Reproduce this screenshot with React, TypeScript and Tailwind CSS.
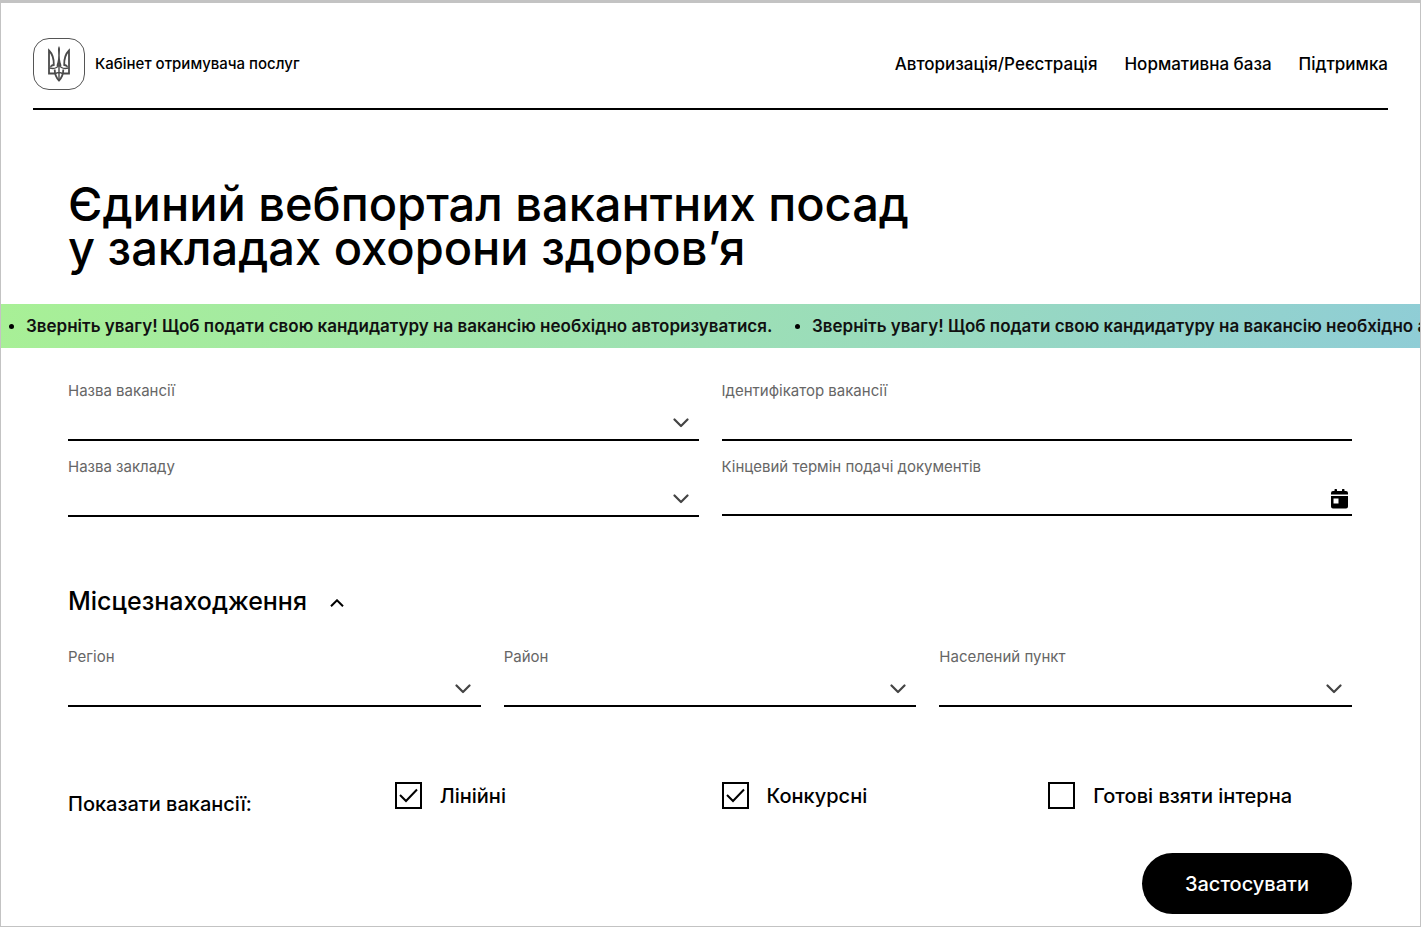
import { useState } from 'react';

const NAV_LINKS = ['Авторизація/Реєстрація', 'Нормативна база', 'Підтримка'];

const NOTICE = 'Зверніть увагу! Щоб подати свою кандидатуру на вакансію необхідно авторизуватися.';

const LOCATION_FIELDS = [
    { id: 'region', label: 'Регіон' },
    { id: 'district', label: 'Район' },
    { id: 'city', label: 'Населений пункт' },
];

const VACANCY_TYPES = [
    { id: 'linear', label: 'Лінійні', checked: true },
    { id: 'contest', label: 'Конкурсні', checked: true },
    { id: 'intern', label: 'Готові взяти інтерна', checked: false },
];

interface FieldProps {
    id: string;
    label: string;
}

function FieldLabel({ id, label }: FieldProps) {
    return (
        <label htmlFor={id} className="block text-[15px] leading-5 text-[#666666]">
            {label}
        </label>
    );
}

function SelectField({ id, label }: FieldProps) {
    return (
        <div>
            <FieldLabel id={id} label={label} />
            <div className="relative border-b-2 border-black">
                <select id={id} className="block h-[38px] w-full appearance-none bg-transparent pr-10 outline-none">
                    <option value=""></option>
                </select>
                <svg
                    viewBox="0 0 16 10"
                    className="pointer-events-none absolute right-2.5 top-[17px] h-2.5 w-4"
                    fill="none"
                    stroke="#444444"
                    strokeWidth="2.2"
                    strokeLinecap="round"
                    strokeLinejoin="round"
                >
                    <path d="M1.500 1.500l6.500 6.500 6.500-6.500" />
                </svg>
            </div>
        </div>
    );
}

function TextField({ id, label }: FieldProps) {
    return (
        <div>
            <FieldLabel id={id} label={label} />
            <input
                id={id}
                type="text"
                className="block h-10 w-full border-b-2 border-black bg-transparent outline-none"
            />
        </div>
    );
}

function DateField({ id, label }: FieldProps) {
    return (
        <div>
            <FieldLabel id={id} label={label} />
            <div className="flex h-[39px] items-center border-b-2 border-black pr-1">
                <input id={id} type="text" className="h-full min-w-0 flex-1 bg-transparent outline-none" />
                <button type="button" aria-label="Відкрити календар" className="pt-1.5">
                    <svg viewBox="0 0 17 20" className="h-5 w-[17px]" fill="black">
                        <path d="M3.500 1a1 1 0 0 1 2.500 0v1h5V1a1 1 0 0 1 2.500 0v1H15a2 2 0 0 1 2 2v1.500H0V4a2 2 0 0 1 2-2h1.500z" />
                        <path
                            fillRule="evenodd"
                            d="M0 7h17v10.500a2 2 0 0 1-2 2H2a2 2 0 0 1-2-2zM2.500 9.500v5H7.500v-5z"
                        />
                    </svg>
                </button>
            </div>
        </div>
    );
}

function Trident() {
    return (
        <svg viewBox="0 0 24 36" className="h-9 w-6" fill="none" stroke="#4a4a4a" strokeWidth="1.800">
            {/* middle prong */}
            <path
                d="M12 0c-1 1.500-1.200 3-.9 6 .4 5 0 9-1.600 13.500l1 1L12 18.500l1.500 2 1-1c-1.600-4.500-2-8.500-1.600-13.500.3-3 .1-4.500-.9-6z"
                fill="#4a4a4a"
                stroke="none"
            />
            {/* side prongs */}
            <path d="M8.500 27.500H2V4.500c3.500 3.500 5 8 4.800 14.500-2 .2-3 1-2.800 2" />
            <path d="M15.500 27.500H22V4.500c-3.500 3.500-5 8-4.800 14.500 2 .2 3 1 2.800 2" />
            {/* lower knot */}
            <path d="M2.500 22c4 1 7.500.5 9.500-3 2 3.500 5.500 4 9.500 3" strokeWidth="1.400" />
            <path d="M7.700 23.500c0 5 1.300 8 4.300 11 3-3 4.300-6 4.300-11" />
            <path d="M8.300 28c1.500-2 5.900-2 7.400 0M12 20v13" strokeWidth="1.400" />
        </svg>
    );
}

function Header() {
    return (
        <header className="mx-8 flex items-center justify-between border-b-2 border-black pb-[18px] pt-[35px]">
            <a href="#" className="flex items-center gap-2.5">
                <span className="flex size-[52px] items-center justify-center rounded-2xl border border-[#555555]">
                    <Trident />
                </span>
                <span className="text-[15px] font-medium">Кабінет отримувача послуг</span>
            </a>
            <nav className="flex gap-[27px]">
                {NAV_LINKS.map((link) => (
                    <a key={link} href="#" className="text-[17px] leading-7 font-medium">
                        {link}
                    </a>
                ))}
            </nav>
        </header>
    );
}

function NoticeBar() {
    return (
        <div className="flex h-11 items-center overflow-hidden whitespace-nowrap bg-linear-[110deg] from-[#a8f096] via-[#9de0b4] to-[#8fcdd6] pl-2 text-[17px] leading-7 font-semibold text-[#111111]">
            {[0, 1].map((n) => (
                <span key={n} className="flex w-[786px] shrink-0 items-center gap-3">
                    <span className="size-[5px] rounded-full bg-black" />
                    {NOTICE}
                </span>
            ))}
        </div>
    );
}

export default function App() {
    const [locationOpen, setLocationOpen] = useState(true);

    return (
        <div className="min-h-screen border border-t-[3px] border-[#c3c3c3] bg-white font-['Inter',sans-serif] text-black">
            <Header />

            <main>
                <h1 className="px-[67px] pb-[34px] pt-[72px] text-[47px] font-medium leading-11">
                    Єдиний вебпортал вакантних посад
                    <br />у закладах охорони здоров’я
                </h1>

                <NoticeBar />

                <form className="pb-3 pl-[67px] pr-17 pt-[33px]" onSubmit={(e) => e.preventDefault()}>
                    <div className="grid grid-cols-2 gap-x-[23px] gap-y-4">
                        <SelectField id="vacancy" label="Назва вакансії" />
                        <TextField id="vacancy-id" label="Ідентифікатор вакансії" />
                        <SelectField id="institution" label="Назва закладу" />
                        <DateField id="deadline" label="Кінцевий термін подачі документів" />
                    </div>

                    <h2 className="mt-[68px] text-[25px] leading-8 font-medium">
                        <button
                            type="button"
                            className="flex items-center gap-[23px]"
                            aria-expanded={locationOpen}
                            onClick={() => setLocationOpen(!locationOpen)}
                        >
                            Місцезнаходження
                            <svg
                                viewBox="0 0 14 8"
                                className={locationOpen ? 'mt-1 h-2 w-3.5' : 'mt-1 h-2 w-3.5 rotate-180'}
                                fill="none"
                                stroke="black"
                                strokeWidth="2"
                            >
                                <path d="M1 7.300l6-6 6 6" />
                            </svg>
                        </button>
                    </h2>

                    {locationOpen && (
                        <div className="mt-[30px] grid grid-cols-3 gap-x-[23px]">
                            {LOCATION_FIELDS.map((field) => (
                                <SelectField key={field.id} id={field.id} label={field.label} />
                            ))}
                        </div>
                    )}

                    <fieldset className="mt-[75px] grid grid-cols-4 gap-x-[23px]" aria-labelledby="types-title">
                        <p id="types-title" className="pt-2 text-xl leading-7 font-medium">
                            Показати вакансії:
                        </p>
                        {VACANCY_TYPES.map((type) => (
                            <label
                                key={type.id}
                                className="flex h-[27px] items-center gap-[18px] whitespace-nowrap text-xl font-medium"
                            >
                                <span className="relative size-[27px] shrink-0">
                                    <input
                                        type="checkbox"
                                        defaultChecked={type.checked}
                                        className="peer block size-full appearance-none border-2 border-black bg-white"
                                    />
                                    <svg
                                        viewBox="0 0 27 27"
                                        className="pointer-events-none absolute inset-0 hidden size-full peer-checked:block"
                                        fill="none"
                                        stroke="black"
                                        strokeWidth="2"
                                    >
                                        <path d="M5 13l6 6L22 7.500" />
                                    </svg>
                                </span>
                                {type.label}
                            </label>
                        ))}
                    </fieldset>

                    <div className="mt-[35px] flex justify-end">
                        <button type="submit" className="h-[61px] rounded-full bg-black px-[43px] text-xl font-medium text-white">
                            Застосувати
                        </button>
                    </div>
                </form>
            </main>
        </div>
    );
}
